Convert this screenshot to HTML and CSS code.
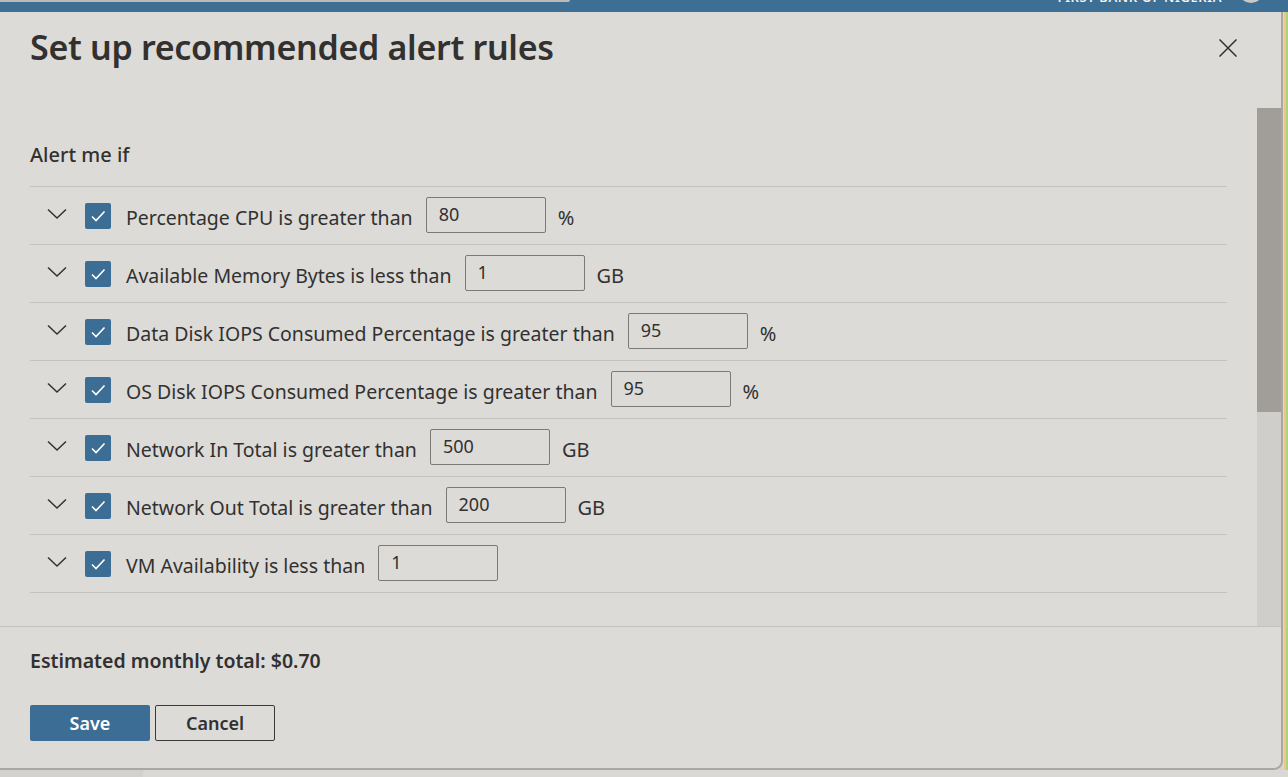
FILE: index.html
```html
<!DOCTYPE html>
<html lang="en">
<head>
<meta charset="utf-8">
<title>Set up recommended alert rules</title>
<link rel="stylesheet" href="styles.css">
</head>
<body>
<div class="page">
  <div class="topbar">
    <div class="topbar-line"></div>
    <div class="topbar-right">
      <span class="org">FIRST BANK OF NIGERIA</span>
      <span class="avatar"></span>
    </div>
  </div>
  <div class="middle">
    <div class="dialog">
      <div class="dialog-header">
        <h1 class="title">Set up recommended alert rules</h1>
        <button class="close" aria-label="Close">
          <svg width="18" height="18" viewBox="0 0 18 18"><path d="M0.5 0.5 L17.5 17.5 M17.5 0.5 L0.5 17.5" stroke="#323130" stroke-width="1.5" fill="none"/></svg>
        </button>
      </div>
      <div class="scroll-area">
        <div class="content">
          <div class="section-label">Alert me if</div>
          <div class="rules">
            <div class="rule">
              <span class="chevron"><svg width="20" height="12" viewBox="0 0 20 12"><path d="M1 1.5 L10 10 L19 1.5" stroke="#323130" stroke-width="1.5" fill="none"/></svg></span>
              <span class="check"><svg width="26" height="26" viewBox="0 0 26 26"><path d="M7 13.5 L11 17.5 L19.5 8.5" stroke="#fff" stroke-width="1.6" fill="none"/></svg></span>
              <span class="rule-label">Percentage CPU is greater than</span>
              <span class="field">80</span>
              <span class="unit">%</span>
            </div>
            <div class="rule">
              <span class="chevron"><svg width="20" height="12" viewBox="0 0 20 12"><path d="M1 1.5 L10 10 L19 1.5" stroke="#323130" stroke-width="1.5" fill="none"/></svg></span>
              <span class="check"><svg width="26" height="26" viewBox="0 0 26 26"><path d="M7 13.5 L11 17.5 L19.5 8.5" stroke="#fff" stroke-width="1.6" fill="none"/></svg></span>
              <span class="rule-label">Available Memory Bytes is less than</span>
              <span class="field">1</span>
              <span class="unit">GB</span>
            </div>
            <div class="rule">
              <span class="chevron"><svg width="20" height="12" viewBox="0 0 20 12"><path d="M1 1.5 L10 10 L19 1.5" stroke="#323130" stroke-width="1.5" fill="none"/></svg></span>
              <span class="check"><svg width="26" height="26" viewBox="0 0 26 26"><path d="M7 13.5 L11 17.5 L19.5 8.5" stroke="#fff" stroke-width="1.6" fill="none"/></svg></span>
              <span class="rule-label">Data Disk IOPS Consumed Percentage is greater than</span>
              <span class="field">95</span>
              <span class="unit">%</span>
            </div>
            <div class="rule">
              <span class="chevron"><svg width="20" height="12" viewBox="0 0 20 12"><path d="M1 1.5 L10 10 L19 1.5" stroke="#323130" stroke-width="1.5" fill="none"/></svg></span>
              <span class="check"><svg width="26" height="26" viewBox="0 0 26 26"><path d="M7 13.5 L11 17.5 L19.5 8.5" stroke="#fff" stroke-width="1.6" fill="none"/></svg></span>
              <span class="rule-label">OS Disk IOPS Consumed Percentage is greater than</span>
              <span class="field">95</span>
              <span class="unit">%</span>
            </div>
            <div class="rule">
              <span class="chevron"><svg width="20" height="12" viewBox="0 0 20 12"><path d="M1 1.5 L10 10 L19 1.5" stroke="#323130" stroke-width="1.5" fill="none"/></svg></span>
              <span class="check"><svg width="26" height="26" viewBox="0 0 26 26"><path d="M7 13.5 L11 17.5 L19.5 8.5" stroke="#fff" stroke-width="1.6" fill="none"/></svg></span>
              <span class="rule-label">Network In Total is greater than</span>
              <span class="field">500</span>
              <span class="unit">GB</span>
            </div>
            <div class="rule">
              <span class="chevron"><svg width="20" height="12" viewBox="0 0 20 12"><path d="M1 1.5 L10 10 L19 1.5" stroke="#323130" stroke-width="1.5" fill="none"/></svg></span>
              <span class="check"><svg width="26" height="26" viewBox="0 0 26 26"><path d="M7 13.5 L11 17.5 L19.5 8.5" stroke="#fff" stroke-width="1.6" fill="none"/></svg></span>
              <span class="rule-label">Network Out Total is greater than</span>
              <span class="field">200</span>
              <span class="unit">GB</span>
            </div>
            <div class="rule">
              <span class="chevron"><svg width="20" height="12" viewBox="0 0 20 12"><path d="M1 1.5 L10 10 L19 1.5" stroke="#323130" stroke-width="1.5" fill="none"/></svg></span>
              <span class="check"><svg width="26" height="26" viewBox="0 0 26 26"><path d="M7 13.5 L11 17.5 L19.5 8.5" stroke="#fff" stroke-width="1.6" fill="none"/></svg></span>
              <span class="rule-label">VM Availability is less than</span>
              <span class="field">1</span>
            </div>
          </div>
        </div>
        <div class="scrollbar"><div class="thumb"></div></div>
      </div>
      <div class="dialog-footer">
        <div class="total">Estimated monthly total: $0.70</div>
        <div class="actions">
          <button class="btn btn-primary">Save</button>
          <button class="btn btn-secondary">Cancel</button>
        </div>
      </div>
    </div>
    <div class="edge"></div>
  </div>
  <div class="bottom">
    <div class="bottom-left"></div>
    <div class="bottom-right"></div>
  </div>
</div>
</body>
</html>
```
FILE: styles.css
```css
* { box-sizing: border-box; }
html, body { margin: 0; padding: 0; }
body {
  width: 1288px;
  height: 777px;
  overflow: hidden;
  background: #d6d4d1;
  font-family: "Noto Sans", "Open Sans", sans-serif;
  color: #323130;
}
.page { display: flex; flex-direction: column; height: 777px; }

.topbar {
  height: 12px;
  flex: none;
  background: #3d6e94;
  display: flex;
  justify-content: space-between;
  overflow: hidden;
}
.topbar-line {
  width: 570px;
  height: 2px;
  background: #bdbab6;
  border-bottom-right-radius: 2px;
}
.topbar-right {
  display: flex;
  align-items: flex-start;
  gap: 16px;
  padding-right: 24px;
}
.org {
  color: #f2f2f2;
  font-size: 13px;
  font-weight: 600;
  line-height: 13px;
  margin-top: -9px;
  letter-spacing: 0.6px;
}
.avatar {
  width: 26px;
  height: 26px;
  border-radius: 50%;
  background: #c9c8c6;
  margin-top: -23px;
}

.middle { display: flex; height: 758px; flex: none; }
.dialog {
  width: 1283px;
  height: 758px;
  background: #dcdbd8;
  display: flex;
  flex-direction: column;
  border-right: 2px solid #a9a7a4;
  border-bottom: 2px solid #a9a7a4;
  border-bottom-right-radius: 9px;
}
.edge {
  width: 5px;
  background: linear-gradient(to right, #d9d7d3 0, #d9d7d3 1px, #e6c98f 1px, #e6c98f 3px, #b5cf7a 3px);
}

.dialog-header {
  height: 96px;
  flex: none;
  display: flex;
  justify-content: space-between;
  align-items: flex-start;
  padding: 11px 44px 0 30px;
}
.title {
  margin: 0;
  font-size: 34px;
  font-weight: 600;
  line-height: 48px;
  color: #323130;
  letter-spacing: -0.3px;
}
.close {
  border: 0;
  background: transparent;
  padding: 0;
  margin-top: 16px;
  width: 18px;
  height: 18px;
  display: flex;
}

.scroll-area {
  height: 519px;
  flex: none;
  display: flex;
  border-bottom: 1px solid #c4c2bf;
  overflow: hidden;
}
.content {
  flex: 1;
  padding: 32px 30px 0 30px;
}
.section-label {
  font-size: 20px;
  font-weight: 500;
  line-height: 30px;
  margin-bottom: 16px;
}
.rules { border-top: 1px solid #c4c2bf; }
.rule {
  height: 58px;
  border-bottom: 1px solid #c4c2bf;
  display: flex;
  align-items: center;
  padding-left: 17px;
}
.chevron { width: 20px; height: 12px; display: flex; margin-top: -3px; }
.check {
  width: 26px;
  height: 26px;
  margin-left: 18px;
  background: #3b6d95;
  border-radius: 2px;
  display: flex;
}
.rule-label {
  margin-left: 15px;
  font-size: 19.5px;
  line-height: 26px;
  margin-top: 4px;
}
.field {
  margin-left: 13px;
  width: 120px;
  height: 36px;
  border: 1px solid #7b7977;
  border-radius: 2px;
  padding-left: 12px;
  font-size: 18px;
  line-height: 32px;
  margin-top: -2px;
}
.unit {
  margin-left: 12px;
  font-size: 20px;
  margin-top: 4px;
}

.scrollbar {
  width: 24px;
  flex: none;
  background: #d0cecb;
  display: flex;
  flex-direction: column;
}
.thumb { height: 304px; background: #a19e9a; }

.dialog-footer {
  flex: 1;
  padding: 19px 30px 0 30px;
}
.total {
  font-size: 19.5px;
  font-weight: 600;
  line-height: 30px;
}
.actions { display: flex; gap: 5px; margin-top: 29px; }
.btn {
  width: 120px;
  height: 36px;
  font-family: inherit;
  font-size: 18px;
  font-weight: 600;
  border-radius: 2px;
  padding: 0;
}
.btn-primary { background: #3b6d95; color: #fff; border: 0; }
.btn-secondary { background: transparent; color: #323130; border: 1px solid #3a3938; }

.bottom { flex: 1; display: flex; }
.bottom-left { width: 143px; background: #d3d1ce; }
.bottom-right { flex: 1; background: #d9d8d5; }
```
